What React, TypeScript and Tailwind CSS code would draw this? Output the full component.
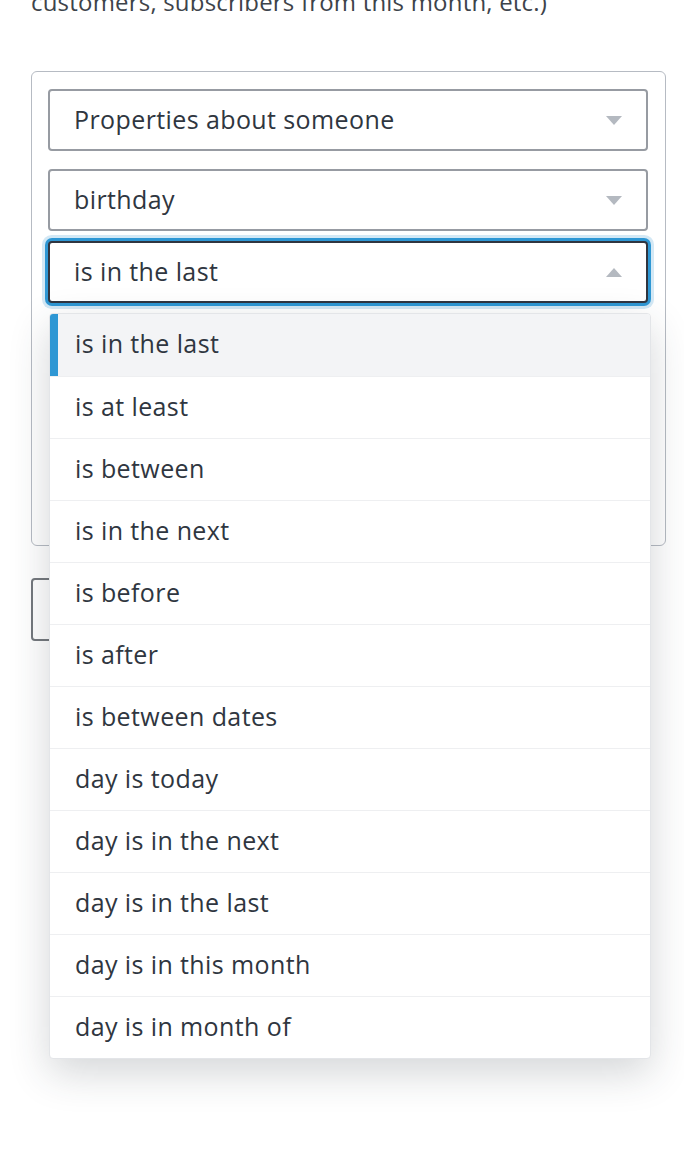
import { useState } from "react";

const options = [
  "is in the last",
  "is at least",
  "is between",
  "is in the next",
  "is before",
  "is after",
  "is between dates",
  "day is today",
  "day is in the next",
  "day is in the last",
  "day is in this month",
  "day is in month of",
];

const Caret = ({ up = false }: { up?: boolean }) => (
  <svg width="16" height="9" viewBox="0 0 16 9" className="shrink-0">
    {up ? (
      <path d="M0 9 L8 0 L16 9 Z" fill="#b4b9c0" />
    ) : (
      <path d="M0 0 L16 0 L8 9 Z" fill="#b4b9c0" />
    )}
  </svg>
);

const SelectBox = ({ label }: { label: string }) => (
  <div className="flex h-[62px] w-[600px] items-center justify-between rounded-[4px] border-2 border-[#979ba2] bg-white pl-[24px] pr-[24px]">
    <span>{label}</span>
    <Caret />
  </div>
);

export default function App() {
  const [selected] = useState("is in the last");

  return (
    <div
      className="relative min-h-[1172px] overflow-hidden bg-white px-[31px] text-[25px] tracking-[0.4px] text-[#2f3640]"
      style={{ fontFamily: "'Open Sans', 'Liberation Sans', sans-serif" }}
    >
      <p className="-mt-[13px] text-[24px] leading-[30px] tracking-[0.2px] text-[#3d434a]">
        customers, subscribers from this month, etc.)
      </p>

      <div className="mt-[54px] h-[475px] w-[635px] rounded-[6px] border border-[#b6bbc3] px-[16px] pt-[17px]">
        <SelectBox label="Properties about someone" />
        <div className="mt-[18px]">
          <SelectBox label="birthday" />
        </div>

        <div className="relative mt-[10px]">
          <div className="flex h-[62px] w-[600px] items-center justify-between rounded-[4px] border-2 border-[#2f3540] bg-white pl-[24px] pr-[24px] shadow-[0_0_0_3px_#2e97d4,0_0_0_6px_#d3e8f5]">
            <span>{selected}</span>
            <Caret up />
          </div>

          <ul className="absolute left-[1px] top-[72px] z-10 w-[602px] overflow-hidden rounded-[4px] border border-[#e3e5e8] bg-white shadow-[0_14px_40px_rgba(40,50,60,0.2)]">
            {options.map((opt, i) => (
              <li
                key={opt}
                className={
                  i === 0
                    ? "flex h-[62px] items-center border-l-[8px] border-[#2e97d4] bg-[#f3f4f6] pl-[17px]"
                    : "flex h-[62px] items-center border-t border-[#eeeff1] pl-[25px]"
                }
              >
                <span className="-mt-[2px]">{opt}</span>
              </li>
            ))}
          </ul>
        </div>
      </div>

      <div className="mt-[32px] h-[63px] w-[220px] rounded-[4px] border-2 border-[#74787d]" />
    </div>
  );
}
